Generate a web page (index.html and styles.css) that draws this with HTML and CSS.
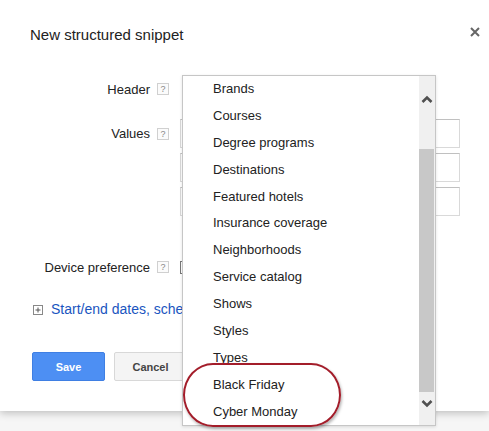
FILE: index.html
```html
<!DOCTYPE html>
<html>
<head>
<meta charset="utf-8">
<link rel="stylesheet" href="styles.css">
</head>
<body>
<div class="dialog">
  <div class="title-row">
    <h1 class="title">New structured snippet</h1>
    <span class="close"><svg width="10" height="10" viewBox="0 0 10 10"><path d="M1 1L9 9M9 1L1 9" stroke="#666" stroke-width="2" fill="none"/></svg></span>
  </div>
  <div class="form">
    <div class="row row-header">
      <div class="lab"><span class="label">Header</span><span class="help">?</span></div>
      <div class="select-box"></div>
    </div>
    <div class="row row-values">
      <div class="lab"><span class="label">Values</span><span class="help">?</span></div>
      <div class="inputs">
        <div class="input"></div>
        <div class="input"></div>
        <div class="input"></div>
      </div>
    </div>
    <div class="row row-device">
      <div class="lab"><span class="label">Device preference</span><span class="help">?</span></div>
      <div class="checkbox"></div>
    </div>
  </div>
  <div class="more">
    <span class="plus"><svg width="10" height="10" viewBox="0 0 10 10"><rect x="0.5" y="0.5" width="9" height="9" fill="#fff" stroke="#888"/><path d="M2.5 5H7.5M5 2.5V7.5" stroke="#555" stroke-width="1"/></svg></span>
    <a class="link">Start/end dates, scheduling</a>
  </div>
  <div class="buttons">
    <span class="btn btn-save">Save</span>
    <span class="btn btn-cancel">Cancel</span>
  </div>
</div>

<div class="dropdown">
  <ul class="list">
    <li>Brands</li>
    <li>Courses</li>
    <li>Degree programs</li>
    <li>Destinations</li>
    <li>Featured hotels</li>
    <li>Insurance coverage</li>
    <li>Neighborhoods</li>
    <li>Service catalog</li>
    <li>Shows</li>
    <li>Styles</li>
    <li>Types</li>
    <li>Black Friday</li>
    <li>Cyber Monday</li>
  </ul>
  <div class="sb">
    <div class="sb-up"><svg width="12" height="8" viewBox="0 0 12 8"><polyline points="1.5,7 6,2.5 10.5,7" fill="none" stroke="#505050" stroke-width="2.6"/></svg></div>
    <div class="sb-gap"></div>
    <div class="sb-thumb"></div>
    <div class="sb-down"><svg width="12" height="8" viewBox="0 0 12 8"><polyline points="1.5,1 6,5.5 10.5,1" fill="none" stroke="#505050" stroke-width="2.6"/></svg></div>
    <div class="sb-rest"></div>
  </div>
</div>

<div class="highlight"></div>
</body>
</html>
```
FILE: styles.css
```css
html, body {
  margin: 0;
  padding: 0;
}
body {
  width: 489px;
  height: 431px;
  overflow: hidden;
  position: relative;
  background: #f6f6f6;
  font-family: "Liberation Sans", Arial, sans-serif;
  color: #222;
}
.dialog {
  background: #fff;
  height: 411px;
  box-sizing: border-box;
  padding: 26px 0 0 30px;
  box-shadow: 0 2px 8px rgba(0, 0, 0, 0.24);
}
.title-row {
  display: flex;
  justify-content: space-between;
  align-items: flex-start;
  padding-right: 9px;
}
.title {
  margin: 0;
  font-size: 15px;
  line-height: 18px;
  font-weight: normal;
  color: #222;
}
.close {
  display: block;
  width: 10px;
  height: 10px;
  margin-top: 1px;
}
.close svg { display: block; }
.form {
  margin-top: 31px;
  display: flex;
  flex-direction: column;
}
.row {
  display: flex;
  align-items: flex-start;
}
.lab {
  display: flex;
  align-items: center;
  width: 139px;
}
.label {
  width: 120px;
  text-align: right;
  font-size: 13px;
}
.help {
  width: 10px;
  height: 10px;
  margin-left: 7px;
  border: 1px solid #d0d0d0;
  background: #fbfbfb;
  color: #888;
  font-size: 9px;
  line-height: 10px;
  text-align: center;
}
.row-header .lab { height: 28px; }
.select-box {
  width: 254px;
  height: 28px;
  margin-left: 13px;
  box-sizing: border-box;
  border: 1px solid #ccc;
}
.row-values { margin-top: 16px; }
.row-values .lab { height: 29px; }
.inputs {
  display: flex;
  flex-direction: column;
  gap: 5px;
  margin-left: 11px;
}
.input {
  width: 280px;
  height: 29px;
  box-sizing: border-box;
  border: 1px solid #d9d9d9;
  border-top-color: #c0c0c0;
  background: #fff;
}
.row-device { margin-top: 41px; }
.row-device .lab { height: 20px; }
.checkbox {
  width: 13px;
  height: 13px;
  margin-left: 11px;
  margin-top: 4px;
  box-sizing: border-box;
  border: 1px solid #777;
  background: #fff;
}
.more {
  display: flex;
  align-items: center;
  margin-top: 23px;
  height: 18px;
  padding-left: 3px;
}
.plus { display: block; width: 10px; height: 10px; margin-top: 1px; flex: none; }
.plus svg { display: block; }
.link {
  margin-left: 8px;
  font-size: 14px;
  color: #1a55c0;
  white-space: nowrap;
  max-width: 131px;
  overflow: hidden;
}
.buttons {
  display: flex;
  gap: 9px;
  margin-top: 34px;
  padding-left: 2px;
}
.btn {
  display: flex;
  align-items: center;
  justify-content: center;
  width: 73px;
  height: 29px;
  box-sizing: border-box;
  border-radius: 2px;
  font-size: 11px;
  font-weight: bold;
}
.btn-save {
  background: #4d8ff3;
  border: 1px solid #3f7fe3;
  color: #fff;
}
.btn-cancel {
  background: #f4f4f4;
  border: 1px solid #d8d8d8;
  color: #444;
}
.dropdown {
  position: absolute;
  left: 182px;
  top: 75px;
  width: 254px;
  height: 351px;
  box-sizing: border-box;
  border: 1px solid #c6c6c6;
  background: #fff;
  display: flex;
  box-shadow: 0 1px 3px rgba(0, 0, 0, 0.12);
}
.list {
  flex: 1;
  margin: 0;
  padding: 0;
  list-style: none;
  overflow: hidden;
}
.list li {
  height: 26.9px;
  line-height: 26.9px;
  padding-left: 30px;
  font-size: 13px;
  color: #222;
  white-space: nowrap;
}
.sb {
  width: 16px;
  display: flex;
  flex-direction: column;
  background: #f0f0f0;
}
.sb-up, .sb-down {
  display: flex;
  align-items: center;
  justify-content: center;
}
.sb-up { height: 46px; }
.sb-gap { height: 27px; }
.sb-thumb {
  height: 243px;
  background: #c8c8c8;
  margin-right: 1px;
}
.sb-down { height: 24px; }
.sb-rest { flex: 1; }
.sb svg { display: block; }
.highlight {
  position: absolute;
  left: 183px;
  top: 363px;
  width: 158px;
  height: 64px;
  box-sizing: border-box;
  border: 2px solid #a31d2a;
  border-radius: 30px / 32px;
  box-shadow: 1px 2px 3px rgba(0, 0, 0, 0.3);
}
```
